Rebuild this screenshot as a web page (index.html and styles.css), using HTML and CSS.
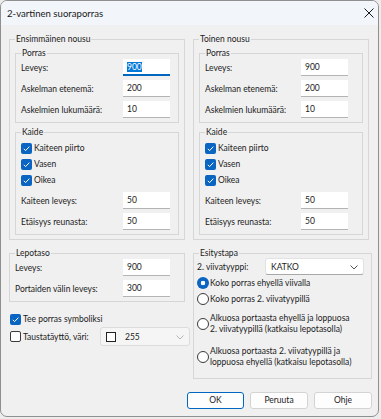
FILE: index.html
```html
<!DOCTYPE html>
<html lang="fi">
<head>
  <meta charset="UTF-8">
  <title>2-vartinen suoraporras</title>
  <link rel="stylesheet" href="styles.css">
</head>
<body>

  <div class="window">
    <div class="titlebar">
      <span class="title">2-vartinen suoraporras</span>
      <svg class="close" width="10" height="10" viewBox="0 0 10 10">
        <path d="M0.5 0.5 L9.5 9.5 M9.5 0.5 L0.5 9.5" stroke="#1a1a1a" stroke-width="1" fill="none"/>
      </svg>
    </div>

    <div class="content">
      <div class="grid">

        <fieldset class="group first">
          <legend>Ensimmäinen nousu</legend>
          <fieldset class="sub porras">
            <legend>Porras</legend>
            <div class="row"><span>Leveys:</span><span class="field focus"><span class="sel">900</span></span></div>
            <div class="row"><span>Askelman etenemä:</span><span class="field">200</span></div>
            <div class="row"><span>Askelmien lukumäärä:</span><span class="field">10</span></div>
          </fieldset>
          <fieldset class="sub kaide">
            <legend>Kaide</legend>
            <div class="checks">
              <div class="check"><span class="box on"></span>Kaiteen piirto</div>
              <div class="check"><span class="box on"></span>Vasen</div>
              <div class="check"><span class="box on"></span>Oikea</div>
            </div>
            <div class="row"><span>Kaiteen leveys:</span><span class="field">50</span></div>
            <div class="row"><span>Etäisyys reunasta:</span><span class="field">50</span></div>
          </fieldset>
        </fieldset>

        <fieldset class="group second">
          <legend>Toinen nousu</legend>
          <fieldset class="sub porras">
            <legend>Porras</legend>
            <div class="row"><span>Leveys:</span><span class="field">900</span></div>
            <div class="row"><span>Askelman etenemä:</span><span class="field">200</span></div>
            <div class="row"><span>Askelmien lukumäärä:</span><span class="field">10</span></div>
          </fieldset>
          <fieldset class="sub kaide">
            <legend>Kaide</legend>
            <div class="checks">
              <div class="check"><span class="box on"></span>Kaiteen piirto</div>
              <div class="check"><span class="box on"></span>Vasen</div>
              <div class="check"><span class="box on"></span>Oikea</div>
            </div>
            <div class="row"><span>Kaiteen leveys:</span><span class="field">50</span></div>
            <div class="row"><span>Etäisyys reunasta:</span><span class="field">50</span></div>
          </fieldset>
        </fieldset>

        <div class="stack">
          <fieldset class="group lepotaso">
            <legend>Lepotaso</legend>
            <div class="row"><span>Leveys:</span><span class="field">900</span></div>
            <div class="row"><span>Portaiden välin leveys:</span><span class="field">300</span></div>
          </fieldset>
          <div class="check symbol"><span class="box on"></span>Tee porras symboliksi</div>
          <div class="fillrow">
            <div class="check"><span class="box"></span>Taustatäyttö, väri:</div>
            <div class="combo disabled">
              <span class="swatch"></span>255
              <svg class="chev" width="8" height="5" viewBox="0 0 8 5"><path d="M0.5 0.5 L4 4 L7.5 0.5" stroke="#b5b5b5" fill="none"/></svg>
            </div>
          </div>
        </div>

        <fieldset class="group esitys">
          <legend>Esitystapa</legend>
          <div class="typerow">
            <span>2. viivatyyppi:</span>
            <div class="combo">KATKO
              <svg class="chev" width="8" height="5" viewBox="0 0 8 5"><path d="M0.5 0.5 L4 4 L7.5 0.5" stroke="#555" fill="none"/></svg>
            </div>
          </div>
          <div class="radio"><span class="dot on"></span>Koko porras ehyellä viivalla</div>
          <div class="radio"><span class="dot"></span>Koko porras 2. viivatyypillä</div>
          <div class="radio tall"><span class="dot"></span><span>Alkuosa portaasta ehyellä ja loppuosa<br>2. viivatyypillä (katkaisu lepotasolla)</span></div>
          <div class="radio tall"><span class="dot"></span><span>Alkuosa portaasta 2. viivatyypillä ja<br>loppuosa ehyellä (katkaisu lepotasolla)</span></div>
        </fieldset>

      </div>

      <div class="footer">
        <span class="btn default">OK</span>
        <span class="btn">Peruuta</span>
        <span class="btn">Ohje</span>
      </div>
    </div>
  </div>

</body>
</html>
```

FILE: styles.css
```css
* {
  box-sizing: border-box;
}
body {
  margin: 0;
  background: #ececec;
  font-family: Lato, "Liberation Sans", sans-serif;
  font-size: 8.5px;
  color: #1b1b1b;
}
.window {
  width: 379px;
  height: 417px;
  background: #f0f0f0;
  border: 1px solid #8f8f8f;
  border-radius: 7px;
  overflow: hidden;
}
.titlebar {
  height: 24px;
  background: #f2f5fa;
  display: flex;
  align-items: center;
  justify-content: space-between;
  padding: 0 4px 0 6px;
}
.title {
  font-size: 9.6px;
  color: #1a1a1a;
}
.content {
  padding: 8px 0 0 8px;
}
.grid {
  display: grid;
  grid-template-columns: 176px 179px;
  column-gap: 8px;
  row-gap: 7px;
  align-items: start;
}
fieldset {
  margin: 0;
  padding: 0 5px 4px;
  border: 1px solid #d6d6d6;
  min-width: 0;
}
legend {
  padding: 0 1px;
  line-height: 12px;
}
.sub {
  margin-top: 2px;
}
.sub.kaide {
  margin-top: 3px;
}
.second {
  width: 176px;
}
.row {
  display: flex;
  align-items: center;
  justify-content: space-between;
  height: 17px;
  margin-top: 4px;
}
.porras .row:first-of-type,
.lepotaso .row:first-of-type {
  margin-top: 0;
}
.field {
  width: 47px;
  height: 17px;
  background: #fff;
  border-bottom: 1px solid #b4b4b4;
  padding-left: 4px;
  line-height: 16px;
  margin-right: 3px;
}
.second .field {
  margin-right: 9px;
}
.lepotaso .field {
  margin-right: 9px;
}
.field.focus {
  border-bottom: 2px solid #0067c0;
}
.sel {
  background: #0078d7;
  color: #fff;
}
.checks {
  margin: 2px 0 3px;
}
.check {
  display: flex;
  align-items: center;
  height: 16px;
  gap: 2px;
}
.box {
  width: 11px;
  height: 11px;
  border-radius: 2px;
  background: #fff;
  border: 1px solid #3a3a3a;
  flex: none;
}
.box.on {
  border: none;
  background: #0a64c2 url("data:image/svg+xml,%3Csvg xmlns='http://www.w3.org/2000/svg' width='11' height='11'%3E%3Cpath d='M2.8 5.8 L4.6 7.6 L8.4 3.6' stroke='white' stroke-width='1' fill='none'/%3E%3C/svg%3E") no-repeat;
}
.lepotaso {
  padding-left: 5px;
}
.symbol {
  margin-top: 9px;
  padding-left: 1px;
}
.fillrow {
  display: flex;
  align-items: center;
  justify-content: space-between;
  height: 19px;
  padding-left: 1px;
  margin-right: -5px;
}
.combo {
  position: relative;
  display: flex;
  align-items: center;
  height: 17px;
  background: #fff;
  border: 1px solid #e2e2e2;
  border-bottom-color: #a8a8a8;
  border-radius: 3px;
  padding-left: 5px;
}
.combo.disabled {
  width: 90px;
  height: 19px;
  background: #f5f5f5;
  border: 1px solid #dcdcdc;
  color: #1b1b1b;
}
.swatch {
  width: 10px;
  height: 10px;
  border: 1px solid #222;
  background: #fff;
  margin-right: 9px;
}
.chev {
  position: absolute;
  right: 5px;
  top: 50%;
  margin-top: -2px;
}
.esitys {
  padding: 0 0 10px 3px;
}
.esitys legend {
  margin-left: 2px;
}
.typerow {
  display: flex;
  align-items: center;
  justify-content: space-between;
  margin-top: -1px;
  height: 17px;
}
.typerow .combo {
  width: 99px;
  margin-right: 7px;
}
.radio {
  display: flex;
  align-items: center;
  gap: 1px;
  height: 16px;
}
.radio.tall {
  height: auto;
  line-height: 11px;
  margin-top: 6px;
}
.radio.tall + .radio.tall {
  margin-top: 11px;
}
.dot {
  width: 12px;
  height: 12px;
  border-radius: 50%;
  border: 1px solid #3a3a3a;
  background: #fff;
  flex: none;
}
.dot.on {
  border: none;
  background: radial-gradient(circle, #fff 0 2px, #0a64c2 2.6px);
}
.footer {
  display: flex;
  justify-content: flex-end;
  gap: 6px;
  padding-right: 6px;
  margin-top: 13px;
}
.btn {
  width: 58px;
  height: 17px;
  background: #fdfdfd;
  border: 1px solid #d3d3d3;
  border-radius: 3px;
  text-align: center;
  line-height: 15px;
}
.btn.default {
  width: 57px;
  border-color: #0067c0;
}
```
